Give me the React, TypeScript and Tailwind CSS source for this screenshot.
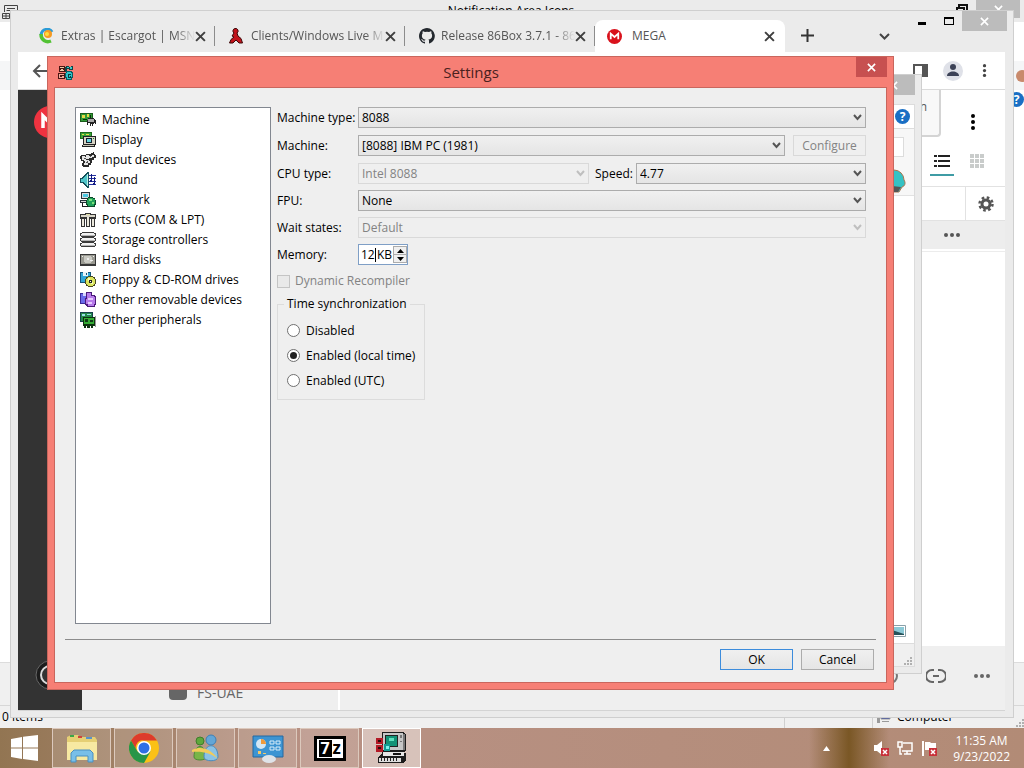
import type { ReactNode } from 'react';

function Glyph({ size = 16, children }: { size?: number; children: ReactNode }) {
  return (
    <svg width={size} height={size} viewBox="0 0 16 16" shapeRendering="crispEdges" className="shrink-0" aria-hidden="true">
      {children}
    </svg>
  );
}

const devices = [
  {
    label: 'Machine',
    icon: (
      <>
        <path d="M0 1h13v9H0z" fill="#1c5c1c" />
        <path d="M1 2h11v7H1z" fill="#2f9a35" />
        <path d="M2 3h3v3H2zM7 2h2v3H7z" fill="#e8d84a" />
        <path d="M3 7h4v1H3zM10 3h1v3h-1z" fill="#0a2f0a" />
        <path d="M7 8h1V6h6v1h1v1h1v4h-1v-1h-1v1h-1v2h-1v-2h-1v2h-1v-3H8v2H7z" fill="#222" />
        <path d="M8 7h6v3H8z" fill="#a9a9a9" />
      </>
    ),
  },
  {
    label: 'Display',
    icon: (
      <>
        <path d="M0 0h12v7H0z" fill="#1c6a1c" />
        <path d="M1 1h10v5H1z" fill="#3aa63a" />
        <path d="M2 2h2v1H2zM6 2h3v1H6z" fill="#efe04a" />
        <path d="M3 4h13v9H3z" fill="#222" />
        <path d="M4 5h11v7H4z" fill="#d8d4c4" />
        <path d="M6 6h6v5H6z" fill="#123" />
        <path d="M7 7h4v3H7z" fill="#67d8e0" />
        <path d="M13 6h1v1h-1z" fill="#1a8a1a" />
        <path d="M2 13h13v2H2z" fill="#222" />
        <path d="M3 13h11v1H3z" fill="#c8c4b4" />
      </>
    ),
  },
  {
    label: 'Input devices',
    icon: (
      <>
        <path d="M1 3h5V2h5V1h2V0h1v2h1v1h1v3h-2v2h-2v3h-1v2h-2v2H3v-1H2v-3h1V9H1V7H0V4h1z" fill="#2b2b2b" />
        <path d="M2 4h3v1h1V3h3v1h3V3h2v2h-2v1H9v1H6v1h3v1h1v2H8v2H4v-2h1V9H4V8H2z" fill="#e6e6e6" />
        <path d="M4 6h2v1H4zM7 9h1v2H6v-1h1zM10 4h1v1h-1z" fill="#555" />
      </>
    ),
  },
  {
    label: 'Sound',
    icon: (
      <>
        <path d="M0 6h2V5h1V4h1V3h1V2h1V1h1V0h2v16H7v-1H6v-1H5v-1H4v-1H3v-1H0z" fill="#14505a" />
        <path d="M1 7h2V6h1V5h1V4h1V3h1v10H6v-1H5v-1H4v-1H1z" fill="#4fc5c9" />
        <path d="M7 2h1v12H7z" fill="#b9f0e8" />
        <path d="M9 3h7v1H9zM9 6h7v1H9zM9 9h7v1H9zM9 12h7v1H9z" fill="#2430a0" />
        <path d="M11 2h1v7h-1zM14 5h1v7h-1zM10 8h2v2h-2zM13 11h2v2h-2z" fill="#121a80" />
      </>
    ),
  },
  {
    label: 'Network',
    icon: (
      <>
        <path d="M1 0h9v7H1z" fill="#263238" />
        <path d="M2 1h7v5H2z" fill="#d8dde0" />
        <path d="M3 2h5v3H3z" fill="#4cc8e0" />
        <path d="M0 8h8v3H0z" fill="#263238" />
        <path d="M1 9h6v1H1z" fill="#d8d8d8" />
        <path d="M8 5h5v1h2v2h1v5h-1v2H7v-2H6V8h1V6h1z" fill="#0b4a28" />
        <path d="M8 6h5v1h2v5h-1v2H8v-2H7V8h1z" fill="#22a25a" />
        <path d="M9 7h3v2H9zM12 10h2v2h-2z" fill="#7ce07c" />
        <path d="M2 11h1v3h5v1H2z" fill="#1b1b1b" />
      </>
    ),
  },
  {
    label: 'Ports (COM & LPT)',
    icon: (
      <>
        <path d="M0 2h5V1h6v1h5v5h-1v8h-4V7h-1v8H6V7H5v8H1V7H0z" fill="#333" />
        <path d="M1 3h14v2H1z" fill="#d9d6c8" />
        <path d="M2 7h2v7H2zM7 5h2v9H7zM12 7h2v7h-2z" fill="#ebe8dc" />
        <path d="M6 2h4v1H6z" fill="#e2dfa6" />
      </>
    ),
  },
  {
    label: 'Storage controllers',
    icon: (
      <>
        {[0, 5, 10].map((y) => (
          <g key={y}>
            <path d={`M2 ${y}h12v1h2v3h-1v1H1v-1H0v-3h2z`} fill="#3b3b3b" />
            <path d={`M2 ${y + 1}h12v1h1v1H1v-1h1z`} fill="#f1f1f1" />
            <path d={`M1 ${y + 3}h14v1H1z`} fill="#b5b5b5" />
          </g>
        ))}
      </>
    ),
  },
  {
    label: 'Hard disks',
    icon: (
      <>
        <path d="M0 2h16v12H0z" fill="#363636" />
        <path d="M1 3h14v9H1z" fill="#9a9a92" />
        <path d="M4 4h7v1h1v5h-1v1H5v-1H4z" fill="#c9c9c2" />
        <path d="M7 6h2v2H7zM10 8h3v1h-3zM2 4h1v1H2zM13 4h1v1h-1z" fill="#eee" />
      </>
    ),
  },
  {
    label: 'Floppy & CD-ROM drives',
    icon: (
      <>
        <path d="M0 0h11v11H0z" fill="#15557a" />
        <path d="M1 1h9v9H1z" fill="#31a6d6" />
        <path d="M3 0h5v4H3z" fill="#e9f3f6" />
        <path d="M6 1h1v2H6z" fill="#15557a" />
        <path d="M8 4h5v1h2v2h1v5h-1v2h-2v1H8v-1H6v-2H5V7h1V5h2z" fill="#474720" />
        <path d="M8 5h5v1h1v1h1v5h-1v1h-1v1H8v-1H7v-1H6V7h1V6h1z" fill="#d9e35a" />
        <path d="M8 6h2v3H8zM11 10h2v2h-2z" fill="#f6f9b8" />
        <path d="M9 8h3v3H9z" fill="#222" />
        <path d="M10 9h1v1h-1z" fill="#fff" />
      </>
    ),
  },
  {
    label: 'Other removable devices',
    icon: (
      <>
        <path d="M0 1h10v11H0z" fill="#3a2a9a" />
        <path d="M1 2h8v9H1z" fill="#6a6aea" />
        <path d="M3 1h4v3H3z" fill="#d6d6ff" />
        <path d="M6 0h6v3h3v1h1v9h-1v2H7v-1H6v-1H5V6h1z" fill="#4b1a7a" />
        <path d="M7 1h4v3h3v1h1v7h-1v2H8v-2H6V7h1z" fill="#b77bea" />
        <path d="M8 6h5v2H8zM8 10h4v2H8z" fill="#e6cbff" />
      </>
    ),
  },
  {
    label: 'Other peripherals',
    icon: (
      <>
        <path d="M0 0h13v10H0z" fill="#153f4a" />
        <path d="M1 1h11v8H1z" fill="#248a4a" />
        <path d="M2 2h3v2H2zM7 2h4v1H7z" fill="#9adfe8" />
        <path d="M3 5h12v9h-2v2h-2v-2h-1v2H7v-2H6v2H4v-2H3z" fill="#0d3310" />
        <path d="M4 6h10v6H4z" fill="#35ad35" />
        <path d="M5 7h3v3H5zM10 8h3v2h-3z" fill="#103c18" />
        <path d="M15 4h1v11h-1z" fill="#999" />
      </>
    ),
  },
];

function Close({ size = 9, className = '' }: { size?: number; className?: string }) {
  return (
    <svg width={size} height={size} viewBox="0 0 10 10" className={className} aria-hidden="true">
      <path d="M1 1l8 8M9 1l-8 8" stroke="currentColor" strokeWidth="1.8" fill="none" />
    </svg>
  );
}

function Dots({ vertical = false, size = 16 }: { vertical?: boolean; size?: number }) {
  return (
    <svg width={size} height={size} viewBox="0 0 16 16" fill="currentColor" className={vertical ? 'rotate-90' : ''} aria-hidden="true">
      <circle cx="2" cy="8" r="2" />
      <circle cx="8" cy="8" r="2" />
      <circle cx="14" cy="8" r="2" />
    </svg>
  );
}

function Help() {
  return (
    <span className="flex size-[15px] shrink-0 items-center justify-center rounded-full bg-[#1a6fc4] text-[12px] leading-[15px] font-bold text-white">
      ?
    </span>
  );
}

function Grip() {
  return (
    <svg width="9" height="9" viewBox="0 0 9 9" fill="#b0b0b0" className="shrink-0" aria-hidden="true">
      <path d="M7 0h2v2H7zM7 3h2v2H7zM7 6h2v2H7zM4 3h2v2H4zM4 6h2v2H4zM1 6h2v2H1z" />
    </svg>
  );
}

function EightySixBox() {
  return (
    <svg width="15" height="15" viewBox="0 0 15 15" shapeRendering="crispEdges" aria-hidden="true">
      <path d="M1 1h6v6H1zM0 8h7v6H0z" fill="#4a1512" />
      <path d="M2 2h4v1H2zM3 4h2v1H3zM2 5h4v1H2z" fill="#f0c8a8" />
      <path d="M1 9h5v1H1zM1 12h5v1H1zM1 10h1v2H1zM4 11h2v1H4z" fill="#f0a898" />
      <path d="M8 1h3v1h2V1h2v4h-4V4H9v3H7V2h1z" fill="#0d4346" />
      <path d="M9 2h2v1H9zM12 2h2v2h-2z" fill="#3cc7c7" />
      <path d="M8 6h6v1h1v6h-1v2H8v-2H7V8h1z" fill="#0b5a60" />
      <path d="M9 7h4v1h1v4h-1v2H9v-2H8V8h1z" fill="#2cc3c8" />
      <path d="M10 9h3v1h-2v2h1v-1h1v2h-3z" fill="#083c40" />
    </svg>
  );
}

function Escargot() {
  return (
    <svg width="16" height="16" viewBox="0 0 16 16" fill="none" aria-hidden="true">
      <path d="M13 4C11 0 3 0 2 7" stroke="#2b9bd6" strokeWidth="3" />
      <path d="M2 6c0 6 5 9 10 7" stroke="#52c234" strokeWidth="3.5" />
      <circle cx="9" cy="6" r="4" fill="#f59a22" />
      <circle cx="8" cy="6" r="2" fill="#ffdf3b" />
    </svg>
  );
}

function Buddy() {
  return (
    <svg width="14" height="16" viewBox="0 0 14 16" aria-hidden="true">
      <path
        d="M6 .5a2.500 2.500 0 0 1 2 4.500l1 3 3 2.500L13.500 15H10l-3-3-3 3H.5L2 11.500 5 9 3 8l2-3A2.500 2.500 0 0 1 6 .5z"
        fill="#c2141c"
        stroke="#3a0808"
      />
    </svg>
  );
}

function GitHub() {
  return (
    <svg width="16" height="16" viewBox="0 0 16 16" fill="#24292f" aria-hidden="true">
      <path d="M8 0C3.6 0 0 3.6 0 8c0 3.5 2.3 6.500 5.500 7.600.4.100.500-.2.500-.4v-1.500c-2.200.5-2.700-1-2.700-1-.4-.9-.9-1.200-.9-1.200-.7-.5.100-.5.100-.5.800.1 1.200.8 1.200.8.700 1.200 1.900.9 2.300.7.100-.5.300-.9.500-1.100-1.800-.2-3.600-.9-3.600-4 0-.9.300-1.600.8-2.100-.1-.2-.4-1 .1-2.100 0 0 .7-.2 2.200.8a7.700 7.700 0 0 1 4 0c1.500-1 2.200-.8 2.200-.8.4 1.100.2 1.900.1 2.100.5.600.8 1.300.8 2.100 0 3.100-1.900 3.700-3.700 3.900.3.300.6.800.6 1.500v2.300c0 .2.100.5.600.4A8 8 0 0 0 8 0z" />
    </svg>
  );
}

function Mega({ size = 15 }: { size?: number }) {
  return (
    <svg width={size} height={size} viewBox="0 0 16 16" className="shrink-0" aria-hidden="true">
      <circle cx="8" cy="8" r="8" fill="#d9121c" />
      <path d="M4 11V5l4 3.500L12 5v6" fill="none" stroke="#fff" strokeWidth="1.900" />
    </svg>
  );
}

const tabs = [
  { title: 'Extras | Escargot | MSN', icon: <Escargot /> },
  { title: 'Clients/Windows Live M', icon: <Buddy /> },
  { title: 'Release 86Box 3.7.1 - 86', icon: <GitHub /> },
];

function NotificationWindow() {
  return (
    <section className="absolute inset-0 flex flex-col bg-white">
      <header className="flex h-[22px] items-start bg-[#ebebeb]">
        <svg width="16" height="16" viewBox="0 0 16 16" fill="none" stroke="#444" className="mt-1 ml-0.5" aria-hidden="true">
          <path d="M2.500 8V1.500h13v5h-11M5 4.500h8M.5 9.500h7v5h-7zM.5 12h7M4 9.500v5" />
        </svg>
        <h2 className="flex-1 pl-12 text-center text-[12px] leading-[22px] text-black">Notification Area Icons</h2>
        <svg width="12" height="12" viewBox="0 0 12 12" fill="none" stroke="#111" strokeWidth="2" className="mt-1 mr-2" aria-hidden="true">
          <path d="M3 3V1h8v7H9M1 4h7v7H1z" />
        </svg>
        <button aria-label="Close notification icons" className="mr-1 flex h-[18px] w-11 items-center justify-center bg-[#bcbcbc] text-white">
          <Close />
        </button>
      </header>
      <div className="h-[39px]" />
      <div className="flex h-[29px] items-center justify-end bg-[#f5f6f7]">
        <span className="-mr-1 h-3 w-3 rounded-full bg-[#c98a6c]" />
      </div>
      <div className="flex flex-1 justify-end pt-0.5">
        <Help />
      </div>
      <div className="h-[43px] border-t border-[#dcdcdc] bg-[#f0f0f0]" />
      <footer className="flex h-[23px] items-center border-t border-[#d7d7d7] bg-[#f0f0f0] text-[12px] text-black">
        <span className="flex-1 pl-0.5">0 items</span>
        <span className="h-full w-[88px] border-l border-[#d0d0d0]" />
        <span className="flex h-full w-[143px] items-center gap-1.5 border-l border-[#d0d0d0] pl-1">
          <svg width="14" height="14" viewBox="0 0 14 14" aria-hidden="true">
            <path d="M4 2h9v7H4z" fill="#2a3fa8" stroke="#999" />
            <path d="M0 5h3v8H0zM5 11h7v1H5z" fill="#9a9a9a" />
          </svg>
          Computer
        </span>
        <span className="self-end">
          <Grip />
        </span>
      </footer>
    </section>
  );
}

function BrowserWindow() {
  return (
    <section className="absolute top-2.5 right-2.5 bottom-2.5 left-2.5 flex flex-col border border-[#cfcfcf] bg-[#ebebeb]">
      <header className="flex h-[41px] shrink-0 items-end pl-3.5">
        <nav className="flex h-8 text-[12px] text-[#555]">
          {tabs.map((tab) => (
            <div key={tab.title} className="flex w-[190px] items-center py-2">
              <div className="flex h-5 w-full items-center border-r border-[#8c8c8c] pr-2 pl-3.5">
                <span className="mr-1.5 flex w-4 shrink-0">{tab.icon}</span>
                <a href="#tab" className="flex-1 overflow-hidden mask-r-from-85% leading-5 whitespace-nowrap">
                  {tab.title}
                </a>
                <button aria-label="Close tab">
                  <Close size={11} className="text-[#3f3f3f]" />
                </button>
              </div>
            </div>
          ))}
          <div className="flex w-[190px] items-center rounded-t-lg bg-white pr-2.5 pl-3">
            <Mega />
            <a href="#mega" className="ml-2.5 flex-1">
              MEGA
            </a>
            <button aria-label="Close tab">
              <Close size={11} className="text-[#3f3f3f]" />
            </button>
          </div>
        </nav>
        <button aria-label="New tab" className="mb-2.5 ml-4">
          <svg width="13" height="13" viewBox="0 0 13 13" stroke="#333" strokeWidth="2" aria-hidden="true">
            <path d="M6.500 0v13M0 6.500h13" />
          </svg>
        </button>
        <span className="flex-1" />
        <button aria-label="Search tabs" className="mr-7 mb-3">
          <svg width="11" height="7" viewBox="0 0 11 7" fill="none" stroke="#444" strokeWidth="2" aria-hidden="true">
            <path d="M1 1l4.500 4.500L10 1" />
          </svg>
        </button>
        <div className="flex self-start">
          <button aria-label="Minimize" className="mt-1.5 mr-[18px] flex h-2 w-2 items-end">
            <span className="h-[3px] w-2 bg-black" />
          </button>
          <button aria-label="Maximize" className="mt-1.5 mr-2 h-2 w-2.5 border border-t-2 border-black" />
          <button aria-label="Close browser" className="mr-1.5 flex h-5 w-[45px] items-center justify-center bg-[#bcbcbc] text-white">
            <Close />
          </button>
        </div>
      </header>
      <div className="mr-2 mb-1.5 ml-[7px] flex min-h-0 flex-1 flex-col border-b border-[#d4d4d4] bg-white">
        <div className="flex h-[38px] shrink-0 items-center border-b border-[#dadada] px-3.5">
          <svg width="16" height="14" viewBox="0 0 16 14" fill="none" stroke="#555" strokeWidth="2" aria-hidden="true">
            <path d="M8 1L2 7l6 6M2 7h14" />
          </svg>
          <span className="flex-1" />
          <svg width="15" height="13" viewBox="0 0 15 13" aria-hidden="true">
            <path d="M1 1h13v11H1z" fill="#fff" stroke="#555" strokeWidth="2" />
            <path d="M9 0h6v13H9z" fill="#555" />
          </svg>
          <span className="mx-[15px] flex size-5 items-center justify-center rounded-full bg-[#dfe1e8]">
            <svg width="12" height="13" viewBox="0 0 12 13" fill="#3c4257" aria-hidden="true">
              <circle cx="6" cy="3" r="3" />
              <path d="M0 12c0-6 12-6 12 0z" />
            </svg>
          </span>
          <button aria-label="Browser menu" className="text-[#444]">
            <Dots vertical size={13} />
          </button>
        </div>
        <div className="flex min-h-0 flex-1">
          <aside className="flex w-16 shrink-0 flex-col items-center justify-between overflow-hidden bg-[#333] pt-4 pb-5">
            <svg width="32" height="32" viewBox="0 0 32 32" aria-hidden="true">
              <circle cx="16" cy="16" r="16" fill="#ee3340" />
              <path d="M9 22V10l7 7 7-7v12" fill="none" stroke="#fff" strokeWidth="3.500" />
            </svg>
            <svg width="30" height="30" viewBox="0 0 30 30" aria-hidden="true">
              <circle cx="15" cy="15" r="14" fill="#1c1c1c" stroke="#666" />
              <circle cx="15" cy="15" r="9" fill="#333" stroke="#dbdbdb" strokeWidth="2" />
            </svg>
          </aside>
          <main className="flex min-w-0 flex-1 flex-col">
            <div className="flex h-[47px] shrink-0 items-start justify-end">
              <span className="h-full w-16 rounded-br-sm border-r-2 border-b-2 border-[#d4d4d4] bg-[#f8f8f8] pr-3 text-right text-[12px] leading-[34px] text-[#555]">
                n
              </span>
              <button aria-label="More" className="mt-6 mr-6 ml-6 text-black">
                <Dots vertical />
              </button>
            </div>
            <div className="flex h-[50px] shrink-0 items-start justify-end gap-4 border-b border-[#e2e2e2] pt-[17px] pr-5">
              <button aria-label="List view" className="h-[22px] w-6 border-b-2 border-[#3f9ca5]">
                <svg width="16" height="14" viewBox="0 0 16 14" fill="#222" className="mx-auto mb-1.5" aria-hidden="true">
                  <path d="M0 1h3v2H0zM4 1h12v2H4zM0 6h3v2H0zM4 6h12v2H4zM0 11h3v2H0zM4 11h12v2H4z" />
                </svg>
              </button>
              <button aria-label="Grid view">
                <svg width="15" height="15" viewBox="0 0 15 15" fill="#c9cccb" aria-hidden="true">
                  <path d="M0 0h4v4H0zM5 0h4v4H5zM10 0h4v4h-4zM0 5h4v4H0zM5 5h4v4H5zM10 5h4v4h-4zM0 10h4v4H0zM5 10h4v4H5zM10 10h4v4h-4z" />
                </svg>
              </button>
            </div>
            <div className="flex h-[34px] shrink-0 justify-end border-b border-[#e2e2e2]">
              <button aria-label="Columns" className="flex w-10 items-center justify-center border-l border-[#e2e2e2]">
                <svg width="16" height="16" viewBox="-8 -8 16 16" fill="none" stroke="#555" aria-hidden="true">
                  <circle r="4" strokeWidth="3" />
                  <circle r="6.500" strokeWidth="2.500" strokeDasharray="2.600 2.500" />
                </svg>
              </button>
            </div>
            <div className="flex h-7 shrink-0 items-center justify-end bg-[#ededed] pr-[45px] text-[#555]">
              <Dots />
            </div>
            <div className="mt-0.5 flex-1 border-t border-[#ececec]" />
            <footer className="flex h-16 shrink-0 justify-between bg-[#efefef] text-[#666]">
              <div className="flex w-[258px] items-end gap-2.5 border-r-2 border-white pb-2 pl-[87px] text-[14px] leading-[19px]">
                <span className="mb-0.5 h-4 w-[18px] rounded-sm bg-[#666]" />
                FS-UAE
              </div>
              <div className="mb-1 flex items-center">
                <span className="flex w-[46px] justify-center">
                  <span className="size-4 rounded-full border-2 border-[#777]" />
                </span>
                <button aria-label="Copy link" className="flex w-[46px] justify-center">
                  <svg width="20" height="14" viewBox="0 0 20 14" fill="none" stroke="#666" strokeWidth="2" aria-hidden="true">
                    <path d="M8 1H6a6 6 0 0 0 0 12h2M12 1h2a6 6 0 0 1 0 12h-2M7 7h6" />
                  </svg>
                </button>
                <button aria-label="More actions" className="flex w-[46px] justify-center">
                  <Dots />
                </button>
              </div>
            </footer>
          </main>
        </div>
      </div>
    </section>
  );
}

function BackWindow() {
  return (
    <section className="absolute top-[74px] right-[102px] bottom-[54px] left-[400px] flex flex-col border border-[#cfcfcf] bg-[#ebebeb] px-1.5 pb-1.5">
      <header className="flex h-[29px] shrink-0 justify-end">
        <button aria-label="Close window" className="flex h-5 w-11 items-center justify-center bg-[#bcbcbc] text-white">
          <Close />
        </button>
      </header>
      <div className="flex flex-1 flex-col border border-[#dcdcdc] bg-white">
        <div className="flex h-6 items-center justify-end border-b border-[#dcdcdc] pr-1">
          <Help />
        </div>
        <div className="flex h-[67px] flex-col items-end justify-between border-b border-[#e2e2e2] bg-[#f7f7f7] pt-2 pr-2 pb-0.5">
          <span className="mr-0.5 h-5 w-24 border border-[#dcdcdc] bg-white" />
          <svg width="24" height="24" viewBox="0 0 24 24" aria-hidden="true">
            <path d="M12 1a10 10 0 0 1 10 10c2 3 1 6-2 7l-3 5H8L2 16V6z" fill="#35c2c4" stroke="#a8754f" />
            <path d="M10 17l9 1-3 5H9z" fill="#555" />
          </svg>
        </div>
        <div className="flex flex-1 items-end justify-end pr-2 pb-1.5">
          <svg width="16" height="12" viewBox="0 0 16 12" aria-hidden="true">
            <path d="M.5.5h15v11H.5z" fill="#fff" stroke="#8aa0a8" />
            <path d="M2 2h12v8H2z" fill="#8cc9d6" />
            <path d="M2 10V5l12 4v1z" fill="#27525a" />
          </svg>
        </div>
        <footer className="flex h-[23px] items-end justify-end border-t border-[#dcdcdc] bg-[#f0f0f0] pr-0.5">
          <Grip />
        </footer>
      </div>
    </section>
  );
}

type ComboProps = { id: string; value: string; disabled?: boolean; className?: string };

function Combo({ id, value, disabled, className = 'flex-1' }: ComboProps) {
  return (
    <div className={`relative h-[21px] ${className}`}>
      <select
        id={id}
        disabled={disabled}
        defaultValue={value}
        className="h-[21px] w-full appearance-none border border-[#acacac] bg-linear-to-b from-[#f0f0f0] to-[#e5e5e5] pr-5 pl-[3px] text-black disabled:border-[#d9d9d9] disabled:bg-none disabled:text-[#838383] disabled:opacity-100"
      >
        <option>{value}</option>
      </select>
      <svg
        width="9"
        height="7"
        viewBox="0 0 9 7"
        fill="none"
        stroke={disabled ? '#bfbfbf' : '#555'}
        strokeWidth="2"
        className="pointer-events-none absolute top-[7px] right-1"
        aria-hidden="true"
      >
        <path d="M1 1l3.500 4L8 1" />
      </svg>
    </div>
  );
}

function Label({ htmlFor, children }: { htmlFor: string; children: ReactNode }) {
  return (
    <label htmlFor={htmlFor} className="w-[81px] shrink-0 whitespace-nowrap">
      {children}
    </label>
  );
}

function MachineForm() {
  return (
    <form className="flex min-w-0 flex-1 flex-col">
      <div className="flex flex-col gap-[7px]">
        <div className="flex items-center">
          <Label htmlFor="machine-type">Machine type:</Label>
          <Combo id="machine-type" value="8088" />
        </div>
        <div className="flex items-center">
          <Label htmlFor="machine">Machine:</Label>
          <Combo id="machine" value="[8088] IBM PC (1981)" />
          <button type="button" disabled className="ml-2 h-[21px] w-[73px] border border-[#d9d9d9] text-[#838383]">
            Configure
          </button>
        </div>
        <div className="flex items-center">
          <Label htmlFor="cpu">CPU type:</Label>
          <Combo id="cpu" value="Intel 8088" disabled />
          <label htmlFor="speed" className="w-[47px] shrink-0 pl-1.5">
            Speed:
          </label>
          <Combo id="speed" value="4.77" className="w-[230px]" />
        </div>
      </div>
      <div className="mt-1.5 flex flex-col gap-1.5">
        <div className="flex items-center">
          <Label htmlFor="fpu">FPU:</Label>
          <Combo id="fpu" value="None" />
        </div>
        <div className="flex items-center">
          <Label htmlFor="wait">Wait states:</Label>
          <Combo id="wait" value="Default" disabled />
        </div>
        <div className="flex items-center">
          <Label htmlFor="memory">Memory:</Label>
          <div className="flex h-[21px] w-[50px] items-center border border-[#7f9fc6] bg-white pl-0.5">
            <input id="memory" defaultValue="12" className="w-3.5 outline-none" />
            <span className="mr-px h-3.5 w-px bg-black" />
            <span>KB</span>
            <span className="ml-auto flex h-[17px] w-3.5 shrink-0 flex-col border border-[#acacac] bg-[#f0f0f0]">
              <button type="button" aria-label="Increase" className="flex flex-1 items-center justify-center border-b border-[#acacac]">
                <svg width="7" height="4" viewBox="0 0 7 4" aria-hidden="true">
                  <path d="M0 4l3.500-4L7 4z" />
                </svg>
              </button>
              <button type="button" aria-label="Decrease" className="flex flex-1 items-center justify-center">
                <svg width="7" height="4" viewBox="0 0 7 4" aria-hidden="true">
                  <path d="M0 0l3.500 4L7 0z" />
                </svg>
              </button>
            </span>
          </div>
        </div>
      </div>
      <label className="mt-2 flex h-4 items-center gap-[5px] text-[#838383]">
        <input type="checkbox" disabled className="size-[13px] appearance-none border border-[#c4c4c4] bg-[#e9e9e9]" />
        Dynamic Recompiler
      </label>
      <fieldset className="mt-[7px] w-[148px] border border-[#dcdcdc] pt-1.5 pb-1.5 pl-[9px]">
        <legend className="-ml-[3px] px-[3px] leading-4">Time synchronization</legend>
        {['Disabled', 'Enabled (local time)', 'Enabled (UTC)'].map((option) => (
          <label key={option} className="flex h-[25px] items-center gap-1.5 whitespace-nowrap">
            <input
              type="radio"
              name="time-sync"
              defaultChecked={option === 'Enabled (local time)'}
              className="size-[13px] shrink-0 appearance-none rounded-full border border-[#707070] bg-white p-0.5 before:block before:size-[7px] before:rounded-full checked:before:bg-[#222]"
            />
            {option}
          </label>
        ))}
      </fieldset>
    </form>
  );
}

function SettingsDialog() {
  return (
    <section className="absolute top-14 right-[130px] bottom-[38px] left-[47px] flex flex-col border border-[#c9665d] bg-[#f67f75] px-1.5 pb-1.5">
      <header className="flex h-[30px] shrink-0 items-center">
        <span className="ml-1 w-7">
          <EightySixBox />
        </span>
        <h1 className="flex-1 text-center text-[15px] text-[#4a211e]">Settings</h1>
        <button aria-label="Close settings" className="flex h-5 w-[31px] items-center justify-center self-start bg-[#c75050] text-white">
          <Close />
        </button>
      </header>
      <div className="flex min-h-0 flex-1 flex-col border border-[#c9665d] bg-[#efefef] px-2.5 pb-3 text-[12px] leading-4 text-black">
        <div className="flex min-h-0 flex-1 gap-1.5 px-2.5 pt-[19px] pb-[15px]">
          <ul className="w-[196px] shrink-0 border border-[#828790] bg-white pt-0.5 pl-1">
            {devices.map((device) => (
              <li key={device.label} className="flex h-5 items-center gap-1.5">
                <Glyph>{device.icon}</Glyph>
                <a href="#device">{device.label}</a>
              </li>
            ))}
          </ul>
          <MachineForm />
        </div>
        <div className="flex justify-end gap-2 border-t border-[#8c8c8c] pt-[9px] pr-0.5">
          <button className="h-[21px] w-[73px] border border-[#3c8cdc] bg-linear-to-b from-[#f0f0f0] to-[#e5e5e5]">OK</button>
          <button className="h-[21px] w-[73px] border border-[#acacac] bg-linear-to-b from-[#f0f0f0] to-[#e5e5e5]">Cancel</button>
        </div>
      </div>
    </section>
  );
}

const apps = [
  {
    name: 'File Explorer',
    icon: (
      <svg width="32" height="32" viewBox="0 0 32 32" aria-hidden="true">
        <path d="M1 5l4-2h7l2 2h15l2 3v20H1z" fill="#e5cf74" />
        <path d="M1 10h30v18H1z" fill="#f7e9a2" />
        <path d="M4 3h4v2H4z" fill="#3aa648" />
        <path d="M12 4h4v2h-4z" fill="#d0453a" />
        <path d="M20 5h6v2h-6z" fill="#5a93c8" />
        <path d="M5 30V21l3-3h16l3 3v9h-5v-6H10v6z" fill="#79bfe8" stroke="#4a8fc0" />
      </svg>
    ),
  },
  {
    name: 'Chrome',
    icon: (
      <svg width="30" height="30" viewBox="-15 -15 30 30" aria-hidden="true">
        <circle r="15" fill="#fbc116" />
        <path d="M-13 -7.500A15 15 0 0 1 13 -7.500H0A7 7 0 0 0 -6.500 4z" fill="#dd3b2c" />
        <path d="M-13 -7.500A15 15 0 0 0 0 15L6.500 3.500H-6.500z" fill="#289548" />
        <circle r="7" fill="#fff" />
        <circle r="5.500" fill="#2f6fe4" />
      </svg>
    ),
  },
  {
    name: 'Messenger',
    icon: (
      <svg width="30" height="30" viewBox="0 0 30 30" aria-hidden="true">
        <circle cx="9" cy="8" r="4" fill="#5fa83c" stroke="#3f7d2b" />
        <path d="M3 24c0-14 12-14 12 0 0 4-12 4-12 0z" fill="#79b548" stroke="#4b8a35" />
        <circle cx="20" cy="7" r="5" fill="#63a6d6" stroke="#3d7fb5" />
        <path d="M13 24c0-15 14-15 14 0 0 5-14 5-14 0z" fill="#8bc3e6" stroke="#4a8bbd" />
        <path d="M1 17c10-5 20 0 26 9-7-6-16-8-26-7z" fill="#f2cb5b" />
      </svg>
    ),
  },
  {
    name: 'Control Panel',
    icon: (
      <svg width="32" height="30" viewBox="0 0 32 30" aria-hidden="true">
        <path d="M1 3h30v21H1z" fill="#3d94d2" stroke="#2569a0" />
        <circle cx="9" cy="11" r="5" fill="#d4e7f4" />
        <path d="M9 11V6a5 5 0 0 1 5 5z" fill="#f09a3a" />
        <path d="M18 8h4v3h-4zM24 8h4v3h-4zM18 14h4v3h-4zM24 14h4v3h-4z" fill="none" stroke="#d9eefa" />
        <path d="M6 18h3v3H6zM11 20h3v1h-3z" fill="#f3c96a" />
        <ellipse cx="17" cy="26" rx="7" ry="4" fill="#dfe3e8" />
      </svg>
    ),
  },
  {
    name: '7-Zip',
    icon: (
      <span className="flex h-[25px] w-8 items-center border-3 border-black bg-white text-black">
        <span className="ml-0.5 flex h-[17px] w-[13px] items-center justify-center bg-black text-[16px] font-bold text-white">7</span>
        <span className="ml-px text-[17px] leading-4 font-bold">z</span>
      </span>
    ),
  },
  {
    name: '86Box',
    active: true,
    icon: (
      <svg width="32" height="32" viewBox="0 0 32 32" shapeRendering="crispEdges" aria-hidden="true">
        <path d="M6 0h21l3 2v17l-3 2h3v7l-3 3H2v-5l4-5z" fill="#1c1c1c" />
        <path d="M7 1h20v17H7z" fill="#c6c6c6" />
        <path d="M9 3h13v12H9z" fill="#222" />
        <path d="M10 4h11v10H10z" fill="#129276" />
        <path d="M13 6h5v3h-5z" fill="#5ee0bd" />
        <path d="M24 3h2v3h-2zM24 9h2v1h-2zM27 2h2v16h-2z" fill="#777" />
        <path d="M7 20h21v4H7z" fill="#e6e6e6" />
        <path d="M17 21h8v2h-8z" fill="#111" />
        <path d="M3 26h22v4H3z" fill="#ddd" />
        <path d="M5 26h1v3H5zM8 26h1v3H8zM11 26h1v3h-1zM14 26h1v3h-1zM17 26h1v3h-1zM20 26h1v3h-1z" fill="#222" />
        <path d="M0 6h7v6H0zM0 13h7v7H0z" fill="#b31926" />
        <path d="M2 8h3v2H2zM2 15h3v2H2z" fill="#2b0a0a" />
        <path d="M8 12h6v7H8z" fill="#129a94" />
        <path d="M10 14h3v3h-3z" fill="#7df1ea" />
      </svg>
    ),
  },
];

function RedCross() {
  return (
    <>
      <path d="M8 8h8v8H8z" fill="#c8323a" />
      <path d="M10 10l4 4M14 10l-4 4" stroke="#fff" strokeWidth="1.500" />
    </>
  );
}

function Taskbar() {
  return (
    <footer className="relative flex h-10 shrink-0 items-stretch bg-linear-to-r from-[#927552] via-[#b89184] via-30% to-[#b28b76]">
      <button aria-label="Start" className="flex w-[52px] items-center justify-center pr-1">
        <svg width="27" height="26" viewBox="0 0 27 26" fill="#fff" aria-hidden="true">
          <path d="M0 4l11-2v10.500H0zM12 1.800L27 0v12.500H12zM0 13.500h11V24L0 22zM12 13.500h15V26l-15-2z" />
        </svg>
      </button>
      <nav className="flex gap-[3px]">
        {apps.map((app) => (
          <button
            key={app.name}
            aria-label={app.name}
            className={`flex w-[59px] items-center justify-center border ${
              app.active ? 'border-white bg-white/45' : 'border-[#dcc9bd] bg-white/15'
            }`}
          >
            {app.icon}
          </button>
        ))}
      </nav>
      <div className="flex-1" />
      <div className="h-full w-20 bg-linear-to-r from-transparent via-[#7a5725] to-transparent" />
      <div className="absolute inset-y-0 right-0 flex items-center pr-3.5 text-white">
        <button aria-label="Show hidden icons" className="mr-[43px]">
          <svg width="7" height="5" viewBox="0 0 7 5" fill="#fff" aria-hidden="true">
            <path d="M0 5l3.500-5L7 5z" />
          </svg>
        </button>
        <div className="mr-4 flex gap-2">
          <svg width="16" height="16" viewBox="0 0 16 16" aria-hidden="true">
            <path d="M1 5h3l5-4v14l-5-4H1z" fill="#fff" />
            <RedCross />
          </svg>
          <svg width="16" height="16" viewBox="0 0 16 16" fill="none" stroke="#fff" strokeWidth="1.500" aria-hidden="true">
            <path d="M6 3h9v8H5M10 11v3M7 14h7M1 2h4v5H1zM3 7v7h2" />
          </svg>
          <svg width="16" height="16" viewBox="0 0 16 16" aria-hidden="true">
            <path d="M1 1h2v15H1zM4 2h5l1 1h5v7H4z" fill="#fff" />
            <RedCross />
          </svg>
        </div>
        <div className="pt-0.5 text-center text-[12px] leading-4">
          11:35 AM
          <br />
          9/23/2022
        </div>
      </div>
      <div className="w-[135px]" />
    </footer>
  );
}

export default function App() {
  return (
    <div className="flex h-screen flex-col overflow-hidden font-['Open_Sans','Noto_Sans',sans-serif]">
      <div className="relative min-h-0 flex-1 overflow-hidden">
        <NotificationWindow />
        <BrowserWindow />
        <BackWindow />
        <SettingsDialog />
      </div>
      <Taskbar />
    </div>
  );
}
